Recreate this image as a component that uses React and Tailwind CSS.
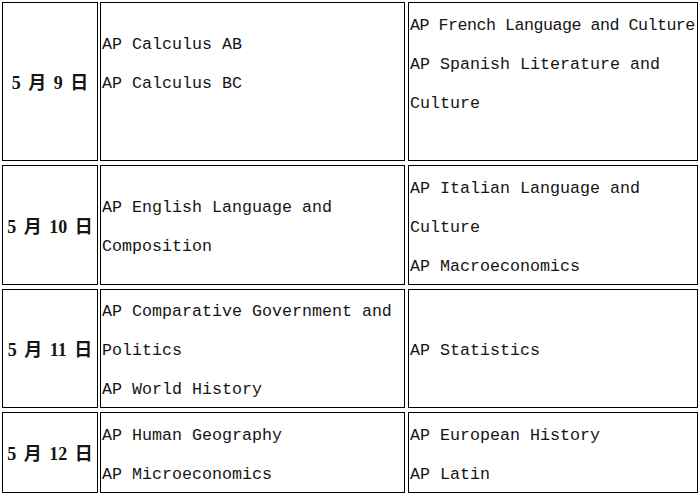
import React from "react";

const rows = [
  {
    date: "5 月 9 日",
    h: "h-[159px]",
    a: ["AP Calculus AB", "AP Calculus BC", ""],
    b: ["AP French Language and Culture", "AP Spanish Literature and", "Culture", ""],
  },
  {
    date: "5 月 10 日",
    h: "h-[120px]",
    a: ["AP English Language and", "Composition"],
    b: ["AP Italian Language and", "Culture", "AP Macroeconomics"],
  },
  {
    date: "5 月 11 日",
    h: "h-[119px]",
    a: ["AP Comparative Government and", "Politics", "AP World History"],
    b: ["AP Statistics"],
  },
  {
    date: "5 月 12 日",
    h: "h-[81px]",
    a: ["AP Human Geography", "AP Microeconomics"],
    b: ["AP European History", "AP Latin"],
  },
];

function Cell({ lines, h }) {
  return (
    <div className={`${h} border border-black flex flex-col justify-center pt-[4px] pl-[1px] overflow-hidden`}>
      {lines.map((l, i) => (
        <div
          key={i}
          className={`h-[39px] leading-[39px] whitespace-pre ${l.length > 29 ? "tracking-[-0.5px]" : ""}`}
        >
          {l || "\u00a0"}
        </div>
      ))}
    </div>
  );
}

export default function App() {
  return (
    <div
      className="w-[700px] h-[496px] bg-white text-[#151515] pt-[2px] pl-[2px]"
      style={{ fontFamily: '"Liberation Mono", monospace' }}
    >
      <div className="grid grid-cols-[96px_305px_291px] gap-x-[2px] gap-y-[4px]">
        {rows.map((r) => (
          <React.Fragment key={r.date}>
            <div
              className={`${r.h} border border-black flex items-center justify-center pt-[4px] font-bold text-[18px] [word-spacing:3px]`}
              style={{ fontFamily: '"Liberation Serif", "Noto Sans CJK SC", serif' }}
            >
              {r.date}
            </div>
            <div className="text-[16.67px]">
              <Cell lines={r.a} h={r.h} />
            </div>
            <div className="text-[16.67px] pl-[1px]">
              <Cell lines={r.b} h={r.h} />
            </div>
          </React.Fragment>
        ))}
      </div>
    </div>
  );
}
